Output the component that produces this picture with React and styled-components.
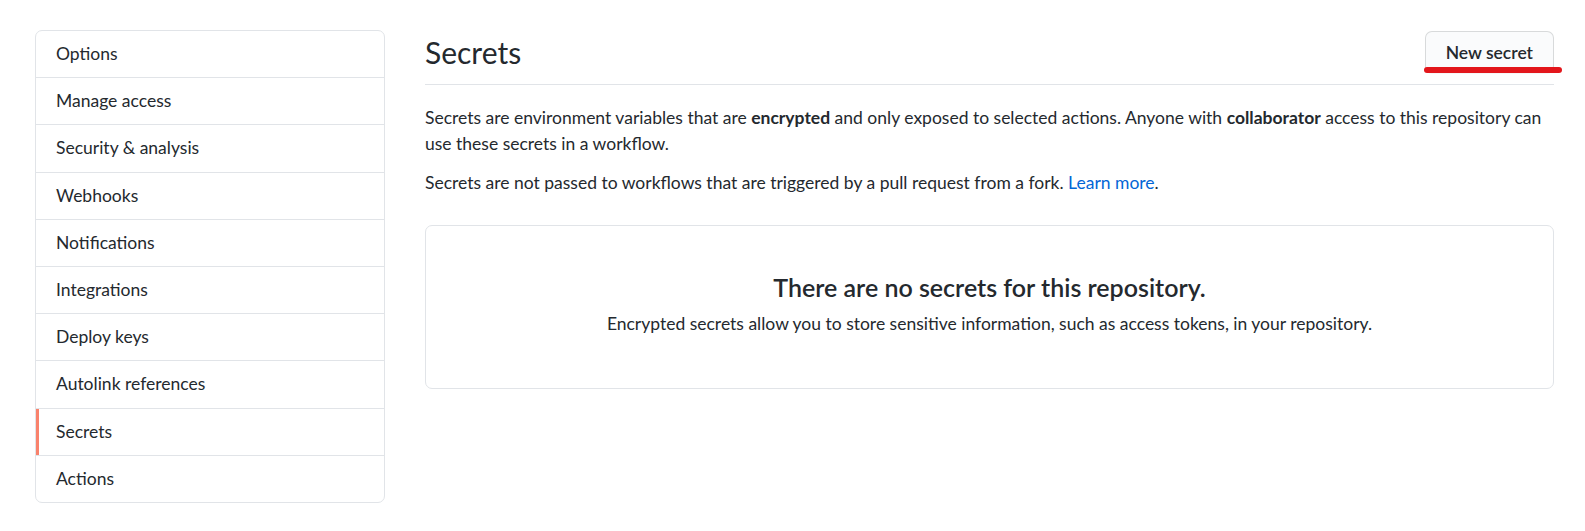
import React from 'react';
import styled, { createGlobalStyle } from 'styled-components';

const GlobalStyle = createGlobalStyle`
    *, *::before, *::after {
        box-sizing: border-box;
    }
    body {
        margin: 0;
        background: #ffffff;
        color: #24292e;
        font-family: "Segoe UI", Lato, "Noto Sans", sans-serif;
        font-size: 17.5px;
        line-height: 1.5;
    }
`;

const Page = styled.div`
    display: flex;
    align-items: flex-start;
    gap: 40px;
    padding: 30px 31px 20px 35px;
`;

const Menu = styled.nav`
    flex: 0 0 350px;
    border: 1px solid #e1e4e8;
    border-radius: 7px;
    overflow: hidden;
    background: #fff;
`;

const MenuItem = styled.a`
    display: block;
    padding: 10px 20px;
    line-height: 26.2px;
    color: #24292e;
    text-decoration: none;
    border-bottom: 1px solid #e1e4e8;
    box-shadow: ${props => props.selected ? 'inset 3px 0 0 #f9826c' : 'none'};
    &:last-child {
        border-bottom: 0;
    }
`;

const Main = styled.main`
    flex: 1;
    min-width: 0;
    margin-top: 1px;
`;

const Subhead = styled.div`
    display: flex;
    align-items: center;
    justify-content: space-between;
    padding-bottom: 11px;
    margin-bottom: 20px;
    border-bottom: 1px solid #e1e4e8;
`;

const Heading = styled.h2`
    margin: 0;
    font-size: 30px;
    font-weight: 400;
    line-height: 42px;
`;

const ButtonWrap = styled.div`
    position: relative;
`;

const Button = styled.button`
    display: block;
    height: 42px;
    padding: 0 20px;
    font-family: inherit;
    font-size: 17.5px;
    font-weight: 600;
    color: #24292e;
    background: #fafbfc;
    border: 1px solid rgba(27, 31, 35, 0.15);
    border-radius: 7px;
    box-shadow: 0 1px 0 rgba(27, 31, 35, 0.04);
`;

// hand drawn red mark under the button
const Scribble = styled.span`
    position: absolute;
    left: -1px;
    right: -8px;
    bottom: 0px;
    height: 6px;
    border-radius: 3px;
    background: #e3161b;
`;

const Text = styled.p`
    margin: 0 0 12.5px;
    line-height: 26.25px;
`;

const Link = styled.a`
    color: #0366d6;
    text-decoration: none;
`;

const Blankslate = styled.div`
    margin-top: 29px;
    padding: 43px 40px 41px;
    border: 1px solid #e1e4e8;
    border-radius: 7px;
    text-align: center;
    h3 {
        margin: 0 0 4px;
        font-size: 25px;
        font-weight: 600;
        line-height: 37.5px;
    }
    p {
        margin: 0 0 10px;
        line-height: 26.25px;
    }
`;

const items = [
    'Options',
    'Manage access',
    'Security & analysis',
    'Webhooks',
    'Notifications',
    'Integrations',
    'Deploy keys',
    'Autolink references',
    'Secrets',
    'Actions',
];

export default function App() {
    return (
        <>
            <GlobalStyle />
            <Page>
                <Menu>
                    {items.map(item => (
                        <MenuItem key={item} href="#" selected={item === 'Secrets'}>
                            {item}
                        </MenuItem>
                    ))}
                </Menu>
                <Main>
                    <Subhead>
                        <Heading>Secrets</Heading>
                        <ButtonWrap>
                            <Button>New secret</Button>
                            <Scribble />
                        </ButtonWrap>
                    </Subhead>
                    <Text>
                        Secrets are environment variables that are <strong>encrypted</strong> and only exposed to selected actions. Anyone with <strong>collaborator</strong> access to this repository can use these secrets in a workflow.
                    </Text>
                    <Text>
                        Secrets are not passed to workflows that are triggered by a pull request from a fork. <Link href="#">Learn more</Link>.
                    </Text>
                    <Blankslate>
                        <h3>There are no secrets for this repository.</h3>
                        <p>Encrypted secrets allow you to store sensitive information, such as access tokens, in your repository.</p>
                    </Blankslate>
                </Main>
            </Page>
        </>
    );
}
